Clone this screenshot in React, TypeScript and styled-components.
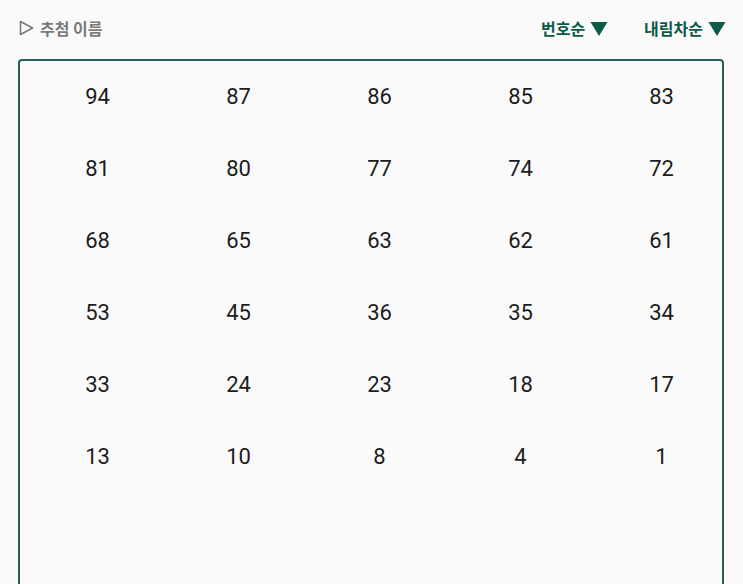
import React from 'react';
import styled, { createGlobalStyle } from 'styled-components';

const GlobalStyle = createGlobalStyle`
  html, body {
    margin: 0;
    padding: 0;
    background: #fafafa;
  }
  body {
    font-family: Roboto, "Noto Sans CJK KR", sans-serif;
  }
`;

const Page = styled.div`
  width: 743px;
  height: 584px;
  overflow: hidden;
  padding: 15px 17px 0 19px;
  box-sizing: border-box;
  background: #fafafa;
`;

const Header = styled.div`
  display: flex;
  align-items: center;
  height: 26px;
  margin-bottom: 18px;
`;

const Title = styled.div`
  flex: 1;
  display: flex;
  align-items: center;
  gap: 6px;
  color: #7a7a7a;
  font-family: "Noto Sans CJK KR", sans-serif;
  font-size: 16px;
  font-weight: 700;
`;

const SortButton = styled.button<{ $gap: number }>`
  display: flex;
  align-items: center;
  gap: 5px;
  border: none;
  background: none;
  padding: 0;
  margin-left: ${({ $gap }) => $gap}px;
  color: #0b5a47;
  font-family: "Noto Sans CJK KR", sans-serif;
  font-size: 16px;
  font-weight: 700;
  cursor: pointer;
`;

const Board = styled.div`
  margin-left: -1px;
  width: 706px;
  height: 540px;
  box-sizing: border-box;
  border: 2px solid #2b5f5b;
  border-radius: 4px;
  background: #fafafa;
  overflow: hidden;
  display: grid;
  grid-template-columns: repeat(5, 141px);
  grid-auto-rows: 72px;
  padding-left: 7px;
  align-content: start;
`;

const Cell = styled.div`
  display: flex;
  align-items: center;
  justify-content: center;
  font-size: 22px;
  color: #1c1c1c;
  padding-bottom: 2px;
`;

const numbers = [94, 87, 86, 85, 83, 81, 80, 77, 74, 72, 68, 65, 63, 62, 61, 53, 45, 36, 35, 34, 33, 24, 23, 18, 17, 13, 10, 8, 4, 1];

const OutlineTriangle = () => (
  <svg width="15" height="16" viewBox="0 0 15 16">
    <path d="M1.5 1.5 L13.5 8 L1.5 14.5 Z" fill="none" stroke="#7a7a7a" strokeWidth="1.6" strokeLinejoin="round" />
  </svg>
);

const DownTriangle = () => (
  <svg width="18" height="15" viewBox="0 0 18 15">
    <path d="M0.5 1 L17.5 1 L9 15 Z" fill="#0b5a47" />
  </svg>
);

export default function App() {
  return (
    <Page>
      <GlobalStyle />
      <Header>
        <Title>
          <OutlineTriangle />
          추첨 이름
        </Title>
        <SortButton $gap={0}>
          번호순
          <DownTriangle />
        </SortButton>
        <SortButton $gap={36}>
          내림차순
          <DownTriangle />
        </SortButton>
      </Header>
      <Board>
        {numbers.map((n) => (
          <Cell key={n}>{n}</Cell>
        ))}
      </Board>
    </Page>
  );
}
